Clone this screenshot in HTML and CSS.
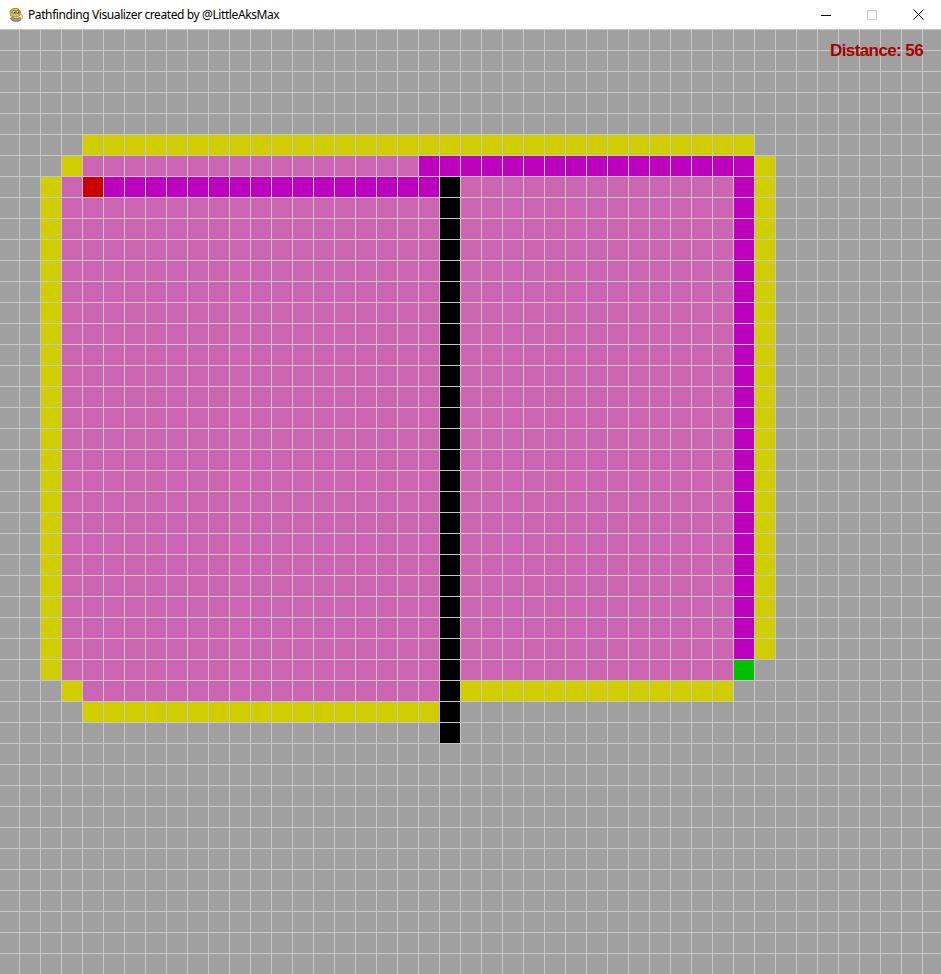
FILE: index.html
```html
<!DOCTYPE html>
<html lang="en">
<head>
<meta charset="utf-8">
<title>Pathfinding Visualizer created by @LittleAksMax</title>
<link rel="stylesheet" href="styles.css">
</head>
<body>
<div class="window">
  <header class="titlebar">
    <svg class="app-icon" viewBox="0 0 16 16" aria-hidden="true">
      <path d="M3 9 C1 6 2 2 6 1.5 C10 1 13 3 12.5 6.5 C12 9 10 10 8 10 L6 10 Z" fill="#e8c81c" stroke="#8a7410" stroke-width="0.8"/>
      <circle cx="6" cy="5" r="1.8" fill="#fff" stroke="#333" stroke-width="0.6"/>
      <circle cx="10" cy="5" r="1.8" fill="#fff" stroke="#333" stroke-width="0.6"/>
      <circle cx="6.3" cy="5.2" r="0.7" fill="#000"/>
      <circle cx="10.3" cy="5.2" r="0.7" fill="#000"/>
      <path d="M2.5 11 C3 15 11 15.5 13 12.5 C13.5 11 12 10 10.5 11 C9 12 6 12 4.5 10.5 Z" fill="#9a9a9a" stroke="#555" stroke-width="0.7"/>
      <path d="M12.5 7 C14.5 8 15 11 13.5 12" fill="none" stroke="#e8c81c" stroke-width="1.4"/>
    </svg>
    <span class="title">Pathfinding Visualizer created by @LittleAksMax</span>
    <div class="controls">
      <div class="ctl"><svg width="10" height="10" viewBox="0 0 10 10"><path d="M0 5.5 H10" stroke="#000" stroke-width="1"/></svg></div>
      <div class="ctl"><svg width="10" height="10" viewBox="0 0 10 10"><rect x="0.5" y="0.5" width="9" height="9" fill="none" stroke="#c8c8c8" stroke-width="1"/></svg></div>
      <div class="ctl"><svg width="11" height="11" viewBox="0 0 11 11"><path d="M0.5 0.5 L10.5 10.5 M10.5 0.5 L0.5 10.5" stroke="#000" stroke-width="1"/></svg></div>
    </div>
  </header>
  <main class="board">
    <div class="distance">Distance: 56</div>
    <div class="rows">
      <div class="row"><span class="e s4"></span><span class="c y s32"></span></div>
      <div class="row"><span class="e s3"></span><span class="c y s1"></span><span class="c p s16"></span><span class="c m s16"></span><span class="c y s1"></span></div>
      <div class="row"><span class="e s2"></span><span class="c y s1"></span><span class="c p s1"></span><span class="c r s1"></span><span class="c m s16"></span><span class="c b s1"></span><span class="c p s13"></span><span class="c m s1"></span><span class="c y s1"></span></div>
      <div class="row"><span class="e s2"></span><span class="c y s1"></span><span class="c p s18"></span><span class="c b s1"></span><span class="c p s13"></span><span class="c m s1"></span><span class="c y s1"></span></div>
      <div class="row"><span class="e s2"></span><span class="c y s1"></span><span class="c p s18"></span><span class="c b s1"></span><span class="c p s13"></span><span class="c m s1"></span><span class="c y s1"></span></div>
      <div class="row"><span class="e s2"></span><span class="c y s1"></span><span class="c p s18"></span><span class="c b s1"></span><span class="c p s13"></span><span class="c m s1"></span><span class="c y s1"></span></div>
      <div class="row"><span class="e s2"></span><span class="c y s1"></span><span class="c p s18"></span><span class="c b s1"></span><span class="c p s13"></span><span class="c m s1"></span><span class="c y s1"></span></div>
      <div class="row"><span class="e s2"></span><span class="c y s1"></span><span class="c p s18"></span><span class="c b s1"></span><span class="c p s13"></span><span class="c m s1"></span><span class="c y s1"></span></div>
      <div class="row"><span class="e s2"></span><span class="c y s1"></span><span class="c p s18"></span><span class="c b s1"></span><span class="c p s13"></span><span class="c m s1"></span><span class="c y s1"></span></div>
      <div class="row"><span class="e s2"></span><span class="c y s1"></span><span class="c p s18"></span><span class="c b s1"></span><span class="c p s13"></span><span class="c m s1"></span><span class="c y s1"></span></div>
      <div class="row"><span class="e s2"></span><span class="c y s1"></span><span class="c p s18"></span><span class="c b s1"></span><span class="c p s13"></span><span class="c m s1"></span><span class="c y s1"></span></div>
      <div class="row"><span class="e s2"></span><span class="c y s1"></span><span class="c p s18"></span><span class="c b s1"></span><span class="c p s13"></span><span class="c m s1"></span><span class="c y s1"></span></div>
      <div class="row"><span class="e s2"></span><span class="c y s1"></span><span class="c p s18"></span><span class="c b s1"></span><span class="c p s13"></span><span class="c m s1"></span><span class="c y s1"></span></div>
      <div class="row"><span class="e s2"></span><span class="c y s1"></span><span class="c p s18"></span><span class="c b s1"></span><span class="c p s13"></span><span class="c m s1"></span><span class="c y s1"></span></div>
      <div class="row"><span class="e s2"></span><span class="c y s1"></span><span class="c p s18"></span><span class="c b s1"></span><span class="c p s13"></span><span class="c m s1"></span><span class="c y s1"></span></div>
      <div class="row"><span class="e s2"></span><span class="c y s1"></span><span class="c p s18"></span><span class="c b s1"></span><span class="c p s13"></span><span class="c m s1"></span><span class="c y s1"></span></div>
      <div class="row"><span class="e s2"></span><span class="c y s1"></span><span class="c p s18"></span><span class="c b s1"></span><span class="c p s13"></span><span class="c m s1"></span><span class="c y s1"></span></div>
      <div class="row"><span class="e s2"></span><span class="c y s1"></span><span class="c p s18"></span><span class="c b s1"></span><span class="c p s13"></span><span class="c m s1"></span><span class="c y s1"></span></div>
      <div class="row"><span class="e s2"></span><span class="c y s1"></span><span class="c p s18"></span><span class="c b s1"></span><span class="c p s13"></span><span class="c m s1"></span><span class="c y s1"></span></div>
      <div class="row"><span class="e s2"></span><span class="c y s1"></span><span class="c p s18"></span><span class="c b s1"></span><span class="c p s13"></span><span class="c m s1"></span><span class="c y s1"></span></div>
      <div class="row"><span class="e s2"></span><span class="c y s1"></span><span class="c p s18"></span><span class="c b s1"></span><span class="c p s13"></span><span class="c m s1"></span><span class="c y s1"></span></div>
      <div class="row"><span class="e s2"></span><span class="c y s1"></span><span class="c p s18"></span><span class="c b s1"></span><span class="c p s13"></span><span class="c m s1"></span><span class="c y s1"></span></div>
      <div class="row"><span class="e s2"></span><span class="c y s1"></span><span class="c p s18"></span><span class="c b s1"></span><span class="c p s13"></span><span class="c m s1"></span><span class="c y s1"></span></div>
      <div class="row"><span class="e s2"></span><span class="c y s1"></span><span class="c p s18"></span><span class="c b s1"></span><span class="c p s13"></span><span class="c m s1"></span><span class="c y s1"></span></div>
      <div class="row"><span class="e s2"></span><span class="c y s1"></span><span class="c p s18"></span><span class="c b s1"></span><span class="c p s13"></span><span class="c m s1"></span><span class="c y s1"></span></div>
      <div class="row"><span class="e s2"></span><span class="c y s1"></span><span class="c p s18"></span><span class="c b s1"></span><span class="c p s13"></span><span class="c g s1"></span></div>
      <div class="row"><span class="e s3"></span><span class="c y s1"></span><span class="c p s17"></span><span class="c b s1"></span><span class="c y s13"></span></div>
      <div class="row"><span class="e s4"></span><span class="c y s17"></span><span class="c b s1"></span></div>
      <div class="row"><span class="e s21"></span><span class="c b s1"></span></div>
    </div>
  </main>
</div>
</body>
</html>
```
FILE: styles.css
```css
html, body {
  margin: 0;
  padding: 0;
  background: #ffffff;
  overflow: hidden;
}

.window {
  width: 941px;
  height: 974px;
  display: flex;
  flex-direction: column;
}

.titlebar {
  flex: none;
  height: 29px;
  display: flex;
  align-items: center;
  background: #ffffff;
}

.app-icon {
  width: 16px;
  height: 16px;
  margin-left: 8px;
  flex: none;
}

.title {
  margin-left: 4px;
  font-family: "Noto Sans", "Open Sans", sans-serif;
  font-size: 12px;
  letter-spacing: -0.4px;
  color: #000000;
  white-space: nowrap;
}

.controls {
  margin-left: auto;
  display: flex;
  height: 29px;
}

.ctl {
  width: 46px;
  height: 29px;
  display: flex;
  align-items: center;
  justify-content: center;
}

.board {
  position: relative;
  flex: 1;
  background-color: #a0a0a0;
  background-image:
    linear-gradient(to left, #c6c6c6 1px, transparent 1px),
    linear-gradient(to top, #c6c6c6 1px, transparent 1px);
  background-size: 21px 100%, 100% 21px;
  background-position: -1px 0, 0 1px;
}

.rows {
  padding-top: 106px;
}

.row {
  display: grid;
  grid-template-columns: 20px repeat(43, 21px) 18px;
  height: 21px;
}

.c {
  background-image:
    linear-gradient(to left, #c6c6c6 1px, transparent 1px),
    linear-gradient(to top, #c6c6c6 1px, transparent 1px);
  background-size: 21px 100%, 100% 21px;
  background-position: 0 0, 0 0;
}

.y { background-color: #d0cd00; }
.p { background-color: #cc66b3; }
.m { background-color: #bd00bd; }
.b { background-color: #000000; }
.r { background-color: #cc0000; }
.g { background-color: #00c000; }

.s1 { grid-column: span 1; }
.s2 { grid-column: span 2; }
.s3 { grid-column: span 3; }
.s4 { grid-column: span 4; }
.s13 { grid-column: span 13; }
.s16 { grid-column: span 16; }
.s17 { grid-column: span 17; }
.s18 { grid-column: span 18; }
.s21 { grid-column: span 21; }
.s32 { grid-column: span 32; }

.distance {
  position: absolute;
  top: 13px;
  right: 18px;
  font-family: "Liberation Sans", Arial, sans-serif;
  font-weight: bold;
  font-size: 17px;
  line-height: 17px;
  letter-spacing: -0.6px;
  color: #a80000;
}
```
